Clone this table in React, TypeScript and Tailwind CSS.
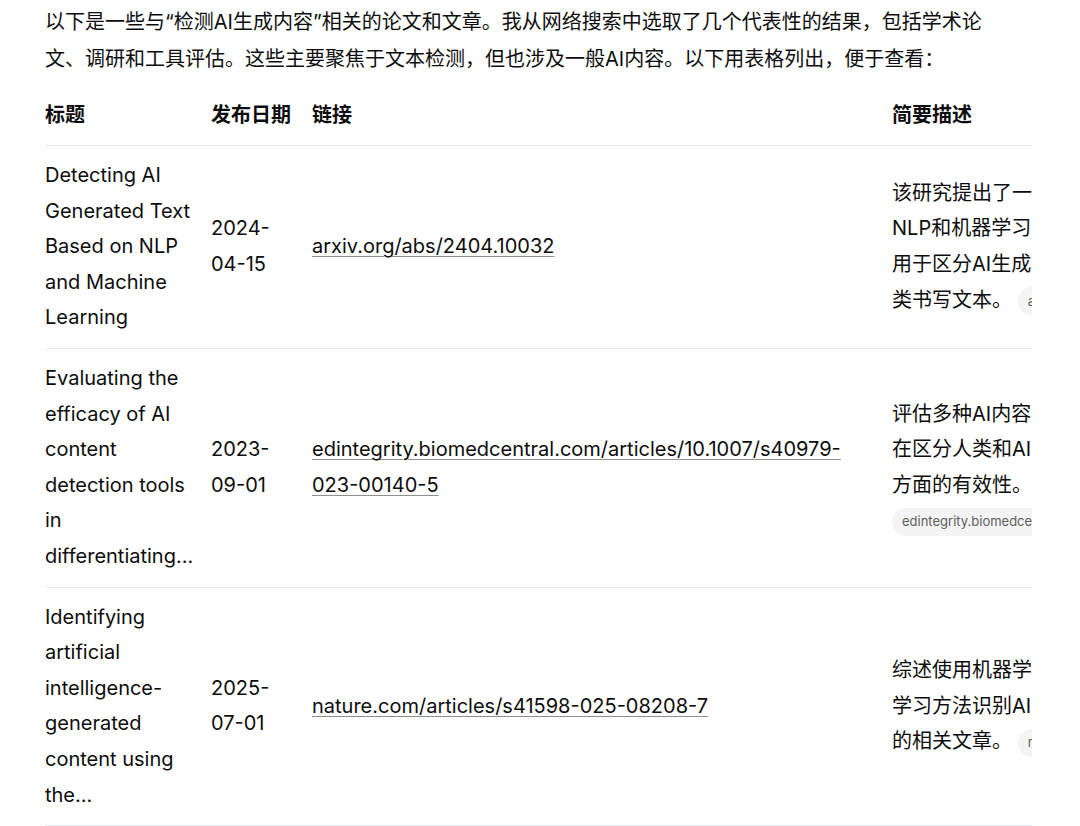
import React from "react";

type Row = {
    title: string;
    date: [string, string];
    link: [string, string?];
    desc: string;
    source: string;
};

const rows: Row[] = [
    {
        title: "Detecting AI Generated Text Based on NLP and Machine Learning",
        date: ["2024-", "04-15"],
        link: ["arxiv.org/abs/2404.10032"],
        desc: "该研究提出了一种基于NLP和机器学习的方法，用于区分AI生成文本和人类书写文本。",
        source: "arxiv.org",
    },
    {
        title: "Evaluating the efficacy of AI content detection tools in differentiating...",
        date: ["2023-", "09-01"],
        link: ["edintegrity.biomedcentral.com/articles/10.1007/s40979-", "023-00140-5"],
        desc: "评估多种AI内容检测工具在区分人类和AI生成文本方面的有效性。",
        source: "edintegrity.biomedcentral.com",
    },
    {
        title: "Identifying artificial intelligence-generated content using the...",
        date: ["2025-", "07-01"],
        link: ["nature.com/articles/s41598-025-08208-7"],
        desc: "综述使用机器学习和深度学习方法识别AI生成内容的相关文章。",
        source: "nature.com",
    },
];

const SourceChip = ({ label }: { label: string }) => (
    <span className="inline-flex items-center h-[28px] rounded-full bg-[#f4f4f4] px-[10px] align-middle text-[13px] leading-none text-[#5d5d5d] whitespace-nowrap">
        {label}
    </span>
);

const App = () => {
    return (
        <div className="min-h-screen bg-white pl-[45px] pt-1 text-[#0d0d0d] font-[Inter,'Noto_Sans_CJK_SC',sans-serif]">
            <p className="w-[940px] text-[20px] leading-[37px]">
                以下是一些与“检测AI生成内容”相关的论文和文章。我从网络搜索中选取了几个代表性的结果，包括学术论文、调研和工具评估。这些主要聚焦于文本检测，但也涉及一般AI内容。以下用表格列出，便于查看：
            </p>

            <div className="w-[987px] overflow-hidden mt-[7px]">
                <table className="table-fixed border-collapse w-[1081px] text-[20px] leading-[35.6px]">
                    <colgroup>
                        <col className="w-[166px]" />
                        <col className="w-[101px]" />
                        <col className="w-[580px]" />
                        <col className="w-[234px]" />
                    </colgroup>
                    <thead>
                        <tr className="border-b border-[#e5e7eb]">
                            <th className="text-left font-semibold pr-3 py-3 leading-[36px]">标题</th>
                            <th className="text-left font-semibold pr-3 py-3 leading-[36px] whitespace-nowrap">发布日期</th>
                            <th className="text-left font-semibold pr-3 py-3 leading-[36px]">链接</th>
                            <th className="text-left font-semibold pr-3 py-3 leading-[36px]">简要描述</th>
                        </tr>
                    </thead>
                    <tbody>
                        {rows.map((row) => (
                            <tr key={row.title} className="border-b border-[#e5e7eb]">
                                <td className="align-middle pr-3 py-3">{row.title}</td>
                                <td className="align-middle pr-3 py-3">
                                    {row.date[0]}
                                    <wbr />
                                    {row.date[1]}
                                </td>
                                <td className="align-middle pr-3 py-3">
                                    <a
                                        href="#"
                                        className="underline decoration-[#8f8f8f] decoration-1 underline-offset-[3px]"
                                    >
                                        {row.link[0]}
                                        {row.link[1] && (
                                            <>
                                                <wbr />
                                                {row.link[1]}
                                            </>
                                        )}
                                    </a>
                                </td>
                                <td className="align-middle pr-3 py-3">
                                    {row.desc}{" "}
                                    <SourceChip label={row.source} />
                                </td>
                            </tr>
                        ))}
                    </tbody>
                </table>
            </div>
        </div>
    );
};

export default App;
